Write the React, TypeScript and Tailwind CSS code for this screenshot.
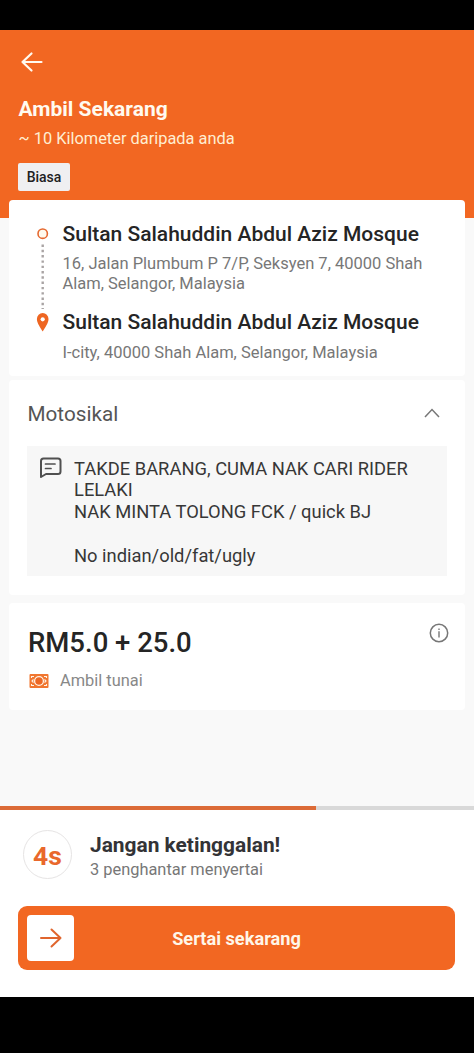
import type { ReactNode } from "react";

function Card({ className, children }: { className: string; children: ReactNode }) {
  return <section className={`mx-[9px] rounded-[4px] bg-white ${className}`}>{children}</section>;
}

function Header() {
  return (
    <header className="h-[188.5px] shrink-0 bg-[#f26722] pl-[18px] pt-[20.5px] text-[#fffaf0]">
      <svg className="ml-[2px] block h-6 w-6" viewBox="0 0 24 24" fill="none" stroke="currentColor" strokeWidth="2.2" strokeLinecap="round" strokeLinejoin="round">
        <path d="M21.500 12H2.500M11.500 3.500L2.500 12l9 8.500" />
      </svg>
      <h1 className="mt-[23px] pl-[0.5px] text-[21px] leading-6 font-bold">Ambil Sekarang</h1>
      <p className="mt-[8px] pl-[0.5px] text-[16.4px] leading-5 text-[#ffeed2]">~ 10 Kilometer daripada anda</p>
      <span className="mt-[14px] flex h-7 w-[52px] items-center justify-center rounded-[2px] bg-[#efeff1] pt-px text-[14px] font-medium text-[#202022]">
        Biasa
      </span>
    </header>
  );
}

function Route() {
  return (
    <Card className="relative -mt-[18px] flex h-[176px] shrink-0 pl-[26px] pt-[21px]">
      <svg className="mt-[6px] h-[106px] w-4 shrink-0" viewBox="0 0 16 106" fill="none">
        <circle cx="7.7" cy="6.7" r="4.7" fill="#fff9ed" stroke="#e5682f" strokeWidth="1.6" />
        <path d="M7.7 17.5V82" stroke="#a9a4a4" strokeWidth="2.4" strokeDasharray="2.4 2.9" />
        <path d="M7.7 104.500C5.8 101 1.900 96.400 1.900 92a5.800 6.100 0 0 1 11.600 0C13.500 96.400 9.600 101 7.700 104.500Z" fill="#ee6622" />
        <circle cx="7.700" cy="92.300" r="2.100" fill="#fff" />
      </svg>
      <div className="ml-[11.5px] whitespace-nowrap">
        <h2 className="pt-px text-[21px] leading-6 font-medium text-[#252525]">Sultan Salahuddin Abdul Aziz Mosque</h2>
        <p className="mt-[8px] text-[16.5px] leading-[19.5px] text-[#777]">
          16, Jalan Plumbum P 7/P, Seksyen 7, 40000 Shah
          <br />
          Alam, Selangor, Malaysia
        </p>
        <h2 className="mt-[17px] text-[21px] leading-6 font-medium text-[#252525]">Sultan Salahuddin Abdul Aziz Mosque</h2>
        <p className="mt-[9px] text-[16.5px] leading-[19.5px] text-[#777]">I-city, 40000 Shah Alam, Selangor, Malaysia</p>
      </div>
    </Card>
  );
}

function Notes() {
  return (
    <Card className="mt-1 h-[215px] shrink-0 px-[18px] pt-[22px]">
      <div className="flex h-6 items-center justify-between">
        <h3 className="pl-[0.5px] text-[20.7px] leading-6 text-[#555]">Motosikal</h3>
        <svg className="mr-[6px] h-4 w-[18px]" viewBox="0 0 18 16" fill="none" stroke="#777" strokeWidth="1.5">
          <path d="M2 11l7-7.500 7 7.500" />
        </svg>
      </div>
      <div className="mt-5 flex h-[130px] bg-[#f7f7f7] pl-[13px] pt-[11.6px]">
        <svg className="-mt-[0.6px] h-[22px] w-[22px] shrink-0" viewBox="0 0 22 22" fill="none" stroke="#505050" strokeWidth="2" strokeLinejoin="round" strokeLinecap="round">
          <path d="M1 20V4Q1 1.500 3.500 1.500H18Q20.500 1.500 20.500 4V14.500Q20.500 17 18 17H6Z" />
          <path d="M5.500 7H15M5.500 11.500H11" strokeWidth="1.700" />
        </svg>
        <p className="ml-[12px] whitespace-pre text-[18.35px] leading-[21.75px] text-[#373737]">
          {"TAKDE BARANG, CUMA NAK CARI RIDER\nLELAKI\nNAK MINTA TOLONG FCK / quick BJ\n\nNo indian/old/fat/ugly"}
        </p>
      </div>
    </Card>
  );
}

function Price() {
  return (
    <Card className="mt-2 flex h-[107px] shrink-0 justify-between pl-[19px] pr-[16px] pt-[20px]">
      <div>
        <p className="mt-[4px] text-[27.5px] leading-8 font-medium text-[#252525]">RM5.0 + 25.0</p>
        <div className="mt-[12px] flex items-center">
          <svg className="-mt-px ml-px h-[14px] w-5" viewBox="0 0 20 14" fill="none">
            <rect x=".500" y="0" width="19" height="14" rx="1" fill="#f1762f" />
            <circle cx="10" cy="7" r="4.400" fill="#ed6825" stroke="#fff4e7" strokeWidth="1.300" />
            <path d="M2.500 4V2.500H5M15 2.500h2.500V4M2.500 10v1.500H5M15 11.500h2.500V10M4.500 5.500L3 7l1.500 1.500M15.500 5.500L17 7l-1.500 1.500" stroke="#fff4e7" strokeWidth="1.100" />
          </svg>
          <span className="ml-[11px] text-[16.4px] leading-5 text-[#888]">Ambil tunai</span>
        </div>
      </div>
      <svg className="h-5 w-5" viewBox="0 0 20 20" fill="none" stroke="#777">
        <circle cx="10" cy="10" r="8.700" strokeWidth="1.500" />
        <path d="M10 8.300v6.200M10 5.400v1.500" strokeWidth="1.400" />
      </svg>
    </Card>
  );
}

function JoinPanel() {
  return (
    <footer className="flex h-[191px] shrink-0 flex-col bg-white">
      <div className="h-1 shrink-0 bg-[#d9d9d9]">
        <div className="h-full w-[316px] bg-[#dc6b37]" />
      </div>
      <div className="flex h-[69px] pl-[23px] pt-[20px]">
        <div className="flex h-[49px] w-[49px] items-center justify-center rounded-full border border-[#e6e4e4] pt-[3px] text-[26.5px] font-bold text-[#e9682c]">
          4s
        </div>
        <div className="ml-[18px] pt-[3px]">
          <p className="text-[20.9px] leading-6 font-bold text-[#333336]">Jangan ketinggalan!</p>
          <p className="mt-[3px] text-[16.4px] leading-5 text-[#777]">3 penghantar menyertai</p>
        </div>
      </div>
      <button className="mx-[18px] mt-[26.5px] grid h-[64px] w-[437px] shrink-0 grid-cols-[47px_1fr_47px] items-center rounded-[9px] bg-[#f26722] px-[9px] text-[#fff6e8]">
        <span className="flex h-[46px] items-center justify-center rounded-[4px] bg-white">
          <svg className="h-5 w-[22px]" viewBox="0 0 22 20" fill="none" stroke="#e0652d" strokeWidth="2" strokeLinecap="round" strokeLinejoin="round">
            <path d="M1 10H20.500M11.500 1.500L20.500 10l-9 8.500" />
          </svg>
        </span>
        <span className="pt-[2px] text-[18.2px] font-bold">Sertai sekarang</span>
      </button>
    </footer>
  );
}

export default function App() {
  return (
    <main className="flex h-[1053px] w-[474px] flex-col overflow-hidden bg-[#f9f9f9] font-[Roboto,sans-serif]">
      <div className="h-[29.5px] shrink-0 bg-black" />
      <Header />
      <Route />
      <Notes />
      <Price />
      <div className="flex-1" />
      <JoinPanel />
      <div className="h-[56px] shrink-0 bg-black" />
    </main>
  );
}
